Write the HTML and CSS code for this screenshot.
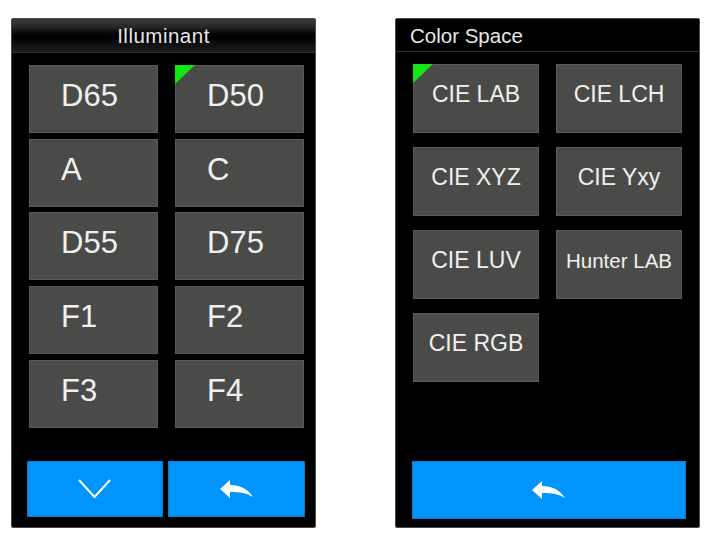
FILE: index.html
```html
<!DOCTYPE html>
<html>
<head>
<meta charset="utf-8">
<link rel="stylesheet" href="styles.css">
</head>
<body>
<div class="screen">
  <div class="header header-grad"><span class="title-center">Illuminant</span></div>
  <div class="grid grid-ill">
    <div class="btn btn-ill">D65</div>
    <div class="btn btn-ill selected">D50</div>
    <div class="btn btn-ill">A</div>
    <div class="btn btn-ill">C</div>
    <div class="btn btn-ill">D55</div>
    <div class="btn btn-ill">D75</div>
    <div class="btn btn-ill">F1</div>
    <div class="btn btn-ill">F2</div>
    <div class="btn btn-ill">F3</div>
    <div class="btn btn-ill">F4</div>
  </div>
  <div class="footer footer-two">
    <div class="blue blue-left">
      <svg width="34" height="20" viewBox="0 0 34 20"><polyline points="1,1 16.5,18 32,1" fill="none" stroke="#fff" stroke-width="2"/></svg>
    </div>
    <div class="blue blue-right">
      <svg width="34" height="19" viewBox="0 0 34 19"><path d="M0 9 L10 0 L10 5 C20 5 28 9 33 17 C27 13 20 12 10 12 L10 18 Z" fill="#fff"/></svg>
    </div>
  </div>
</div>
<div class="screen">
  <div class="header header-flat"><span class="title-left">Color Space</span></div>
  <div class="grid grid-cs">
    <div class="btn btn-cs selected">CIE LAB</div>
    <div class="btn btn-cs">CIE LCH</div>
    <div class="btn btn-cs">CIE XYZ</div>
    <div class="btn btn-cs">CIE Yxy</div>
    <div class="btn btn-cs">CIE LUV</div>
    <div class="btn btn-cs small">Hunter LAB</div>
    <div class="btn btn-cs">CIE RGB</div>
  </div>
  <div class="footer footer-one">
    <div class="blue blue-wide">
      <svg width="34" height="19" viewBox="0 0 34 19"><path d="M0 9 L10 0 L10 5 C20 5 28 9 33 17 C27 13 20 12 10 12 L10 18 Z" fill="#fff"/></svg>
    </div>
  </div>
</div>
</body>
</html>
```
FILE: styles.css
```css
html, body {
  margin: 0;
  background: #fff;
}
body {
  display: flex;
  gap: 79px;
  padding: 18px 0 0 11px;
  font-family: "Liberation Sans", Arial, sans-serif;
}
.screen {
  width: 305px;
  height: 510px;
  box-sizing: border-box;
  background: #000;
  border: 1px solid #4a4a4a;
  border-radius: 2px;
  display: flex;
  flex-direction: column;
}
.header {
  box-sizing: border-box;
  height: 34px;
  display: flex;
  align-items: center;
  color: #e6e6e6;
  font-size: 20.5px;
  flex-shrink: 0;
}
.header-grad {
  justify-content: center;
  background: linear-gradient(#3a3a3a 0%, #262626 25%, #050505 45%, #000 55%, #121212 80%, #1a1a1a 100%);
  border-bottom: 1px solid #2e2e2e;
  padding-top: 1px;
}
.title-center {
  letter-spacing: 0.5px;
}
.header-flat {
  height: 33px;
  background: #000;
  border-bottom: 1px solid #2f2f2f;
  padding-left: 14px;
  padding-top: 1px;
}
.grid {
  display: grid;
  margin-top: 12px;
  padding-left: 17px;
}
.grid-ill {
  grid-template-columns: 129px 129px;
  grid-auto-rows: 68px;
  column-gap: 17px;
  row-gap: 5.7px;
}
.grid-cs {
  grid-template-columns: 126px 126px;
  grid-auto-rows: 69px;
  column-gap: 17px;
  row-gap: 14px;
}
.btn {
  position: relative;
  box-sizing: border-box;
  background: #4a4b48;
  border: 1px solid #5a5b58;
  color: #f0f0f0;
  display: flex;
  align-items: center;
}
.btn-ill {
  font-size: 31px;
  padding-left: 31px;
  padding-bottom: 6px;
}
.btn-cs {
  font-size: 23px;
  justify-content: center;
  padding-bottom: 8px;
}
.btn-cs.small {
  font-size: 20.5px;
}
.selected::before {
  content: "";
  position: absolute;
  left: -1px;
  top: -1px;
  width: 0;
  height: 0;
  border-top: 19px solid #14e614;
  border-right: 20px solid transparent;
}
.footer {
  margin-top: auto;
  display: flex;
}
.footer-two {
  padding: 0 0 10px 15px;
  gap: 5px;
}
.footer-one {
  padding: 0 0 8px 16px;
}
.blue {
  box-sizing: border-box;
  background: #0095fe;
  border: 1px solid #1479c4;
  display: flex;
  align-items: center;
  justify-content: center;
}
.blue-left {
  width: 136px;
  height: 56px;
}
.blue-right {
  width: 137px;
  height: 56px;
}
.blue-wide {
  width: 274px;
  height: 58px;
}
```
